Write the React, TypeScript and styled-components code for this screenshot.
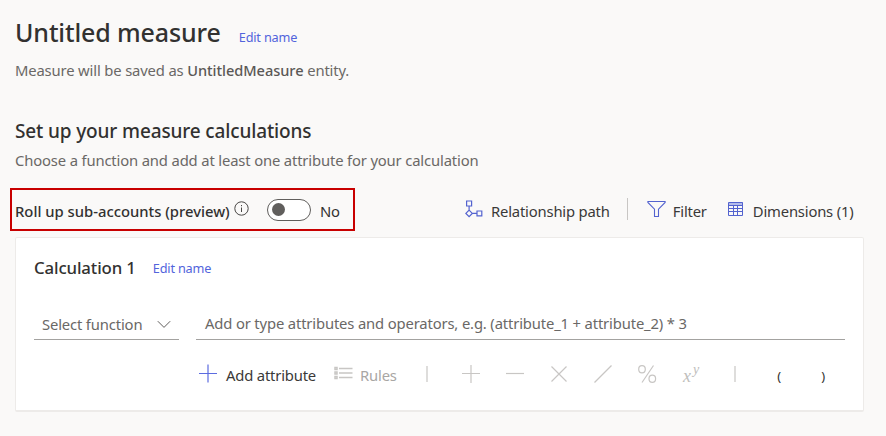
import React from "react";
import styled, { createGlobalStyle } from "styled-components";

const GlobalStyle = createGlobalStyle`
  * { box-sizing: border-box; }
  body {
    margin: 0;
    background: #faf9f8;
    color: #323130;
    font-family: "Noto Sans", "Open Sans", sans-serif;
    font-size: 14.8px;
    font-weight: 400;
    line-height: 20px;
    letter-spacing: -0.15px;
    white-space: nowrap;
  }
`;

const Page = styled.main`
  width: 886px;
  height: 436px;
  padding: 15px 0 0 15px;
  overflow: hidden;
`;

const HeadingRow = styled.div<{ $gap: number }>`
  display: flex;
  align-items: baseline;
  gap: ${(p) => p.$gap}px;
`;

const Title = styled.h1`
  margin: 0;
  font-size: 25px;
  font-weight: 500;
  line-height: 34px;
  letter-spacing: -0.12px;
`;

const LinkButton = styled.button`
  padding: 0;
  border: 0;
  background: none;
  color: #5264dc;
  font: 400 12.7px/18px "Noto Sans", sans-serif;
  letter-spacing: -0.18px;
`;

const CardLink = styled(LinkButton)`
  transform: translateY(-1px);
`;

const Hint = styled.p<{ $top: number }>`
  margin: ${(p) => p.$top}px 0 0;
  color: #6a6866;

  b { font-size: 14.6px; font-weight: 500; letter-spacing: -0.05px; color: #5a5856; }
`;

const SectionTitle = styled.h2`
  margin: 38px 0 0;
  font-size: 19px;
  font-weight: 500;
  line-height: 26px;
  letter-spacing: -0.14px;
`;

const Bar = styled.div`
  display: flex;
  align-items: flex-start;
  margin-top: 18px;
`;

const Highlight = styled.div`
  display: flex;
  align-items: center;
  width: 345px;
  height: 43px;
  margin-left: -5px;
  padding: 2px 0 0 3px;
  border: 2px solid #c80000;
`;

const ToggleLabel = styled.span`
  width: 220px;
  font-size: 14.8px;
  font-weight: 500;
  letter-spacing: 0;
`;

const InfoIcon = styled.svg`
  width: 15px;
  height: 15px;
  margin: -5px 17px 0 -1px;
`;

const Switch = styled.span`
  display: flex;
  align-items: center;
  width: 44px;
  height: 22px;
  margin: -2px 9px 0 1px;
  padding-left: 4px;
  border: 1px solid #605e5c;
  border-radius: 11px;
  background: #fff;

  &::after {
    content: "";
    width: 13px;
    height: 13px;
    border-radius: 50%;
    background: #605e5c;
  }
`;

const Commands = styled.div`
  display: flex;
  align-items: center;
  margin: 10px 0 0 110px;
  padding-top: 3px;
`;

const Command = styled.button<{ $gap: number; $left?: number; $muted?: boolean }>`
  display: flex;
  align-items: center;
  gap: ${(p) => p.$gap}px;
  margin-left: ${(p) => p.$left ?? 0}px;
  padding: 0;
  border: 0;
  background: none;
  color: ${(p) => (p.$muted ? "#a8a6a4" : "#3a3938")};
  font: 400 14.8px/20px "Noto Sans", sans-serif;
  letter-spacing: -0.18px;

  svg { display: block; flex: none; margin-top: -5px; }
`;

const Divider = styled.span`
  width: 1px;
  height: 22px;
  margin: -4px 19px 0 17px;
  background: #c8c6c4;
`;

const Card = styled.section`
  width: 849px;
  height: 175px;
  margin-top: 6px;
  padding: 18px 17px 0 18px;
  border: 1px solid #edebe9;
  border-bottom-width: 2px;
  border-radius: 2px;
  background: #fff;
`;

const CardTitle = styled.h3`
  margin: 0;
  font-size: 16.8px;
  font-weight: 500;
  line-height: 24px;
  letter-spacing: -0.12px;
`;

const Fields = styled.div`
  display: flex;
  gap: 17px;
  margin-top: 30px;
`;

const Field = styled.div<{ $width: number; $offset: number; $inset?: number }>`
  display: flex;
  justify-content: space-between;
  width: ${(p) => p.$width}px;
  height: 30px;
  padding: ${(p) => p.$offset}px 8px 0 ${(p) => p.$inset ?? 8}px;
  border-bottom: 1px solid #a3a2a0;
  color: #6a6866;

  svg { margin: 6px 0 0; }
`;

const Operators = styled.div`
  display: flex;
  align-items: center;
  height: 26px;
  margin: 22px 0 0 164px;
`;

const Slots = styled.div`
  display: grid;
  grid-template-columns: repeat(10, 44px);
  align-items: center;
  justify-items: center;
  margin-left: 8px;
`;

const Paren = styled.span`
  padding: 1px 0 0 1px;
  font-size: 13px;
`;

const OperatorIcon = styled.svg`
  display: block;
  width: 24px;
  height: 24px;
  margin-top: -2px;
  fill: none;
  stroke: #c8c6c4;
  stroke-width: 1.2;
`;

const Power = styled.text`
  fill: #c0bebc;
  stroke: none;
  font-family: "Liberation Serif", serif;
  font-style: italic;
`;

const Relationship = () => (
  <svg width="18" height="18" viewBox="0 0 18 18" fill="none" stroke="#5363cf" strokeWidth="1.2">
    <path d="M1.6 1h5v5h-5zM12 11h4.8v4.8H12zM4.1 6v4M.9 13.4l3.2-3.2 3.2 3.2-3.2 3.2zM7.3 13.4H12" />
  </svg>
);

const Funnel = () => (
  <svg width="19" height="18" viewBox="0 0 19 18" fill="none" stroke="#5363cf" strokeWidth="1.1">
    <path d="M.9 1.5h17.2v1L11.5 9.2v7.3h-4V9.2L.9 2.5z" />
  </svg>
);

const Table = () => (
  <svg width="16" height="16" viewBox="0 0 16 16" fill="none" stroke="#5363cf">
    <path fill="#b5bdea" stroke="none" d="M1 1h14v3H1z" />
    <path d="M.5 1.5h14v13H.5zM.5 4.5h14M.5 7.5h14M.5 10.5h14M5.5 4v10M9.500 4v10" />
  </svg>
);

const Plus = () => (
  <svg width="20" height="20" viewBox="0 0 20 20" fill="none" stroke="#5c6ce0" strokeWidth="1.2">
    <path d="M1 10.5h18M10 1.5v18" />
  </svg>
);

const RulesIcon = () => (
  <svg width="19" height="14" viewBox="0 0 19 14" fill="none" stroke="#c8c6c4" strokeWidth="1.5">
    <path d="M1 1.5h2v2H1zM1 6h2v2H1zM1 10.5h2v2H1zM5 2.5h13.5M5 7h13.5M5 11.5h13.5" />
  </svg>
);

const shapes = {
  bar: "M12 4v16",
  plus: "M3 11.5h18M12 3v18",
  minus: "M3 11.5h18",
  times: "M4.5 4.5l15 15M19.5 4.5l-15 15",
  divide: "M3.5 20.5l17-17",
  percent: "M18.5 3.5L7 20.5M3.7 7.2a3.3 3.6 0 1 0 6.6 0a3.3 3.6 0 1 0-6.6 0M14 16.8a3.3 3.6 0 1 0 6.6 0a3.3 3.6 0 1 0-6.6 0",
};

const Operator = ({ shape }: { shape: keyof typeof shapes }) => (
  <OperatorIcon viewBox="0 0 24 24"><path d={shapes[shape]} /></OperatorIcon>
);

export default function App() {
  return (
    <>
      <GlobalStyle />
      <Page>
        <HeadingRow $gap={18}>
          <Title>Untitled measure</Title>
          <LinkButton>Edit name</LinkButton>
        </HeadingRow>
        <Hint $top={11}>Measure will be saved as <b>UntitledMeasure</b> entity.</Hint>
        <SectionTitle>Set up your measure calculations</SectionTitle>
        <Hint $top={6}>Choose a function and add at least one attribute for your calculation</Hint>

        <Bar>
          <Highlight>
            <ToggleLabel>Roll up sub-accounts (preview)</ToggleLabel>
            <InfoIcon viewBox="0 0 15 15" fill="none" stroke="#484644">
              <circle cx="7.5" cy="7.5" r="6.7" />
              <path d="M7.5 6.5v4.5M7.5 4v1.2" />
            </InfoIcon>
            <Switch role="switch" aria-checked={false} />
            <span>No</span>
          </Highlight>
          <Commands>
            <Command $gap={8}><Relationship />Relationship path</Command>
            <Divider />
            <Command $gap={7}><Funnel />Filter</Command>
            <Command $gap={9} $left={21}><Table />Dimensions (1)</Command>
          </Commands>
        </Bar>

        <Card>
          <HeadingRow $gap={17}>
            <CardTitle>Calculation 1</CardTitle>
            <CardLink>Edit name</CardLink>
          </HeadingRow>
          <Fields>
            <Field $width={145} $offset={4}>
              Select function
              <svg width="14" height="9" viewBox="0 0 14 9" fill="none" stroke="#605e5c">
                <path d="M.8 1.2L7 7.4l6.2-6.2" />
              </svg>
            </Field>
            <Field $width={649} $offset={3} $inset={9}>
              Add or type attributes and operators, e.g. (attribute_1 + attribute_2) * 3
            </Field>
          </Fields>
          <Operators>
            <Command $gap={8}><Plus />Add attribute</Command>
            <Command $gap={7} $left={18} $muted><RulesIcon />Rules</Command>
            <Slots>
              <Operator shape="bar" />
              <Operator shape="plus" />
              <Operator shape="minus" />
              <Operator shape="times" />
              <Operator shape="divide" />
              <Operator shape="percent" />
              <OperatorIcon viewBox="0 0 24 24">
                <Power x="4" y="20" fontSize="18">x</Power>
                <Power x="14" y="12" fontSize="14">y</Power>
              </OperatorIcon>
              <Operator shape="bar" />
              <Paren>(</Paren>
              <Paren>)</Paren>
            </Slots>
          </Operators>
        </Card>
      </Page>
    </>
  );
}
